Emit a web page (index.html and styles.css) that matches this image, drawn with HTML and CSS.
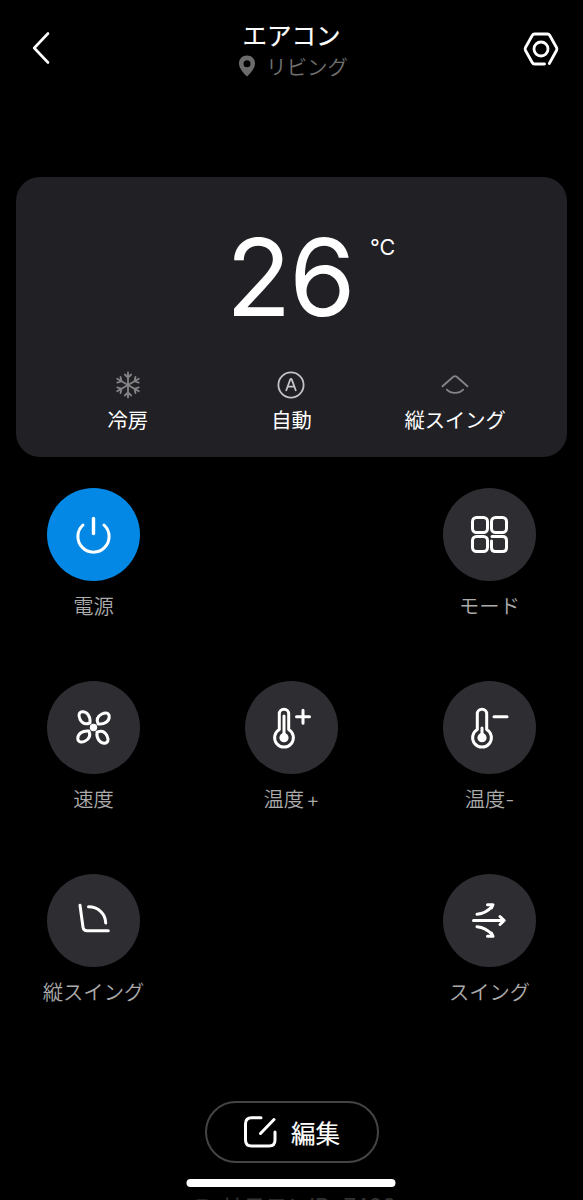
FILE: index.html
```
<!DOCTYPE html>
<html lang="ja">
<head>
    <meta charset="UTF-8">
    <meta name="viewport" content="width=device-width, initial-scale=1.0">
    <title>エアコン</title>
    <link rel="stylesheet" href="styles.css">
</head>
<body>

    <header class="header">
        <svg class="icon" width="36" height="36" viewBox="0 0 36 36">
            <path d="M24 3.5 L10.2 18 L24 32.5" stroke-width="2.6"/>
        </svg>
        <div class="heading">
            <h1>エアコン</h1>
            <div class="room">
                <svg width="18" height="22" viewBox="0 0 18 22">
                    <path fill="#6c6c6c" fill-rule="evenodd" d="M9 .5 C4.2 .5 1 4 1 8.4 C1 13.4 5.5 17.8 9 21.5 C12.5 17.8 17 13.4 17 8.4 C17 4 13.8 .5 9 .5 Z M9 5.3 a3.5 3.5 0 1 1 0 7 a3.5 3.5 0 1 1 0 -7 Z"/>
                </svg>
                <span>リビング</span>
            </div>
        </div>
        <svg class="icon" width="36" height="36" viewBox="0 0 36 36">
            <path d="M21.5 33 H11.5 Q10 33 9.2 31.5 L2.5 19.5 Q1.7 18 2.5 16.5 L9.2 4.5 Q10 3 11.5 3 H24.5 Q26 3 26.8 4.5 L33.5 16.5 Q34.3 18 33.5 19.5 L26.3 32.5" stroke-width="2.8"/>
            <circle cx="18" cy="18" r="7" stroke-width="2.8"/>
        </svg>
    </header>

    <section class="card">
        <div class="temp">26<span class="unit">°C</span></div>
        <div class="status">
            <div class="status-item">
                <svg class="icon snow" width="28" height="28" viewBox="0 0 28 28">
                    <g id="arm"><path d="M14 14 V1.5 M10.8 3.5 L14 6.5 L17.2 3.5"/></g>
                    <use href="#arm" transform="rotate(60 14 14)"/>
                    <use href="#arm" transform="rotate(120 14 14)"/>
                    <use href="#arm" transform="rotate(180 14 14)"/>
                    <use href="#arm" transform="rotate(240 14 14)"/>
                    <use href="#arm" transform="rotate(300 14 14)"/>
                </svg>
                <span>冷房</span>
            </div>
            <div class="status-item">
                <svg class="icon auto" width="28" height="28" viewBox="0 0 28 28">
                    <circle cx="14" cy="14" r="12.6"/>
                    <path d="M9.3 19.3 L13.2 8.6 Q14 7.4 14.8 8.6 L18.7 19.3 M11 15.6 H17"/>
                </svg>
                <span>自動</span>
            </div>
            <div class="status-item">
                <svg class="icon swing" width="28" height="28" viewBox="0 0 28 28">
                    <path d="M1.5 15.3 L12.3 5.8 Q14 4.4 15.7 5.8 L26.5 15.3 M5.8 18.6 C10 23 18 23 22.2 18.6"/>
                </svg>
                <span>縦スイング</span>
            </div>
        </div>
    </section>

    <main class="controls">
        <div class="control">
            <button class="round blue">
                <svg class="icon" width="44" height="44" viewBox="0 0 44 44">
                    <path d="M21.5 5.5 V20.5" stroke-width="3.4"/>
                    <path d="M11 12 A15.6 15.6 0 1 0 32 12"/>
                </svg>
            </button>
            <span>電源</span>
        </div>
        <div class="control right">
            <button class="round">
                <svg class="icon" width="44" height="44" viewBox="0 0 44 44">
                    <rect x="4.5" y="4.5" width="15" height="15" rx="4"/>
                    <rect x="23.5" y="4.5" width="15" height="15" rx="4"/>
                    <rect x="4.5" y="23.5" width="15" height="15" rx="4"/>
                    <path d="M23.5 28 V34.5 Q23.5 38.5 27.5 38.5 H34.5 Q38.5 38.5 38.5 34.5 V27.5 Q38.5 23.5 34.5 23.5 H24"/>
                </svg>
            </button>
            <span>モード</span>
        </div>

        <div class="control">
            <button class="round">
                <svg class="icon" width="44" height="44" viewBox="0 0 44 44">
                    <circle cx="21.5" cy="21.5" r="3.7" class="solid"/>
                    <path d="M18 16.8 C13.5 19 10 17 8 13.2 C6 9 7 6 10.5 5.8 C15 5.6 18.8 10.5 18 16.8 Z"/>
                    <path d="M26.2 18 C24 13.5 26 10 29.8 8 C34 6 37 7 37.2 10.5 C37.4 15 32.5 18.8 26.2 18 Z"/>
                    <path d="M25 26.2 C29.5 24 33 26 35 29.8 C37 34 36 37 32.5 37.2 C28 37.4 24.2 32.5 25 26.2 Z"/>
                    <path d="M16.8 25 C19 29.5 17 33 13.2 35 C9 37 6 36 5.800 32.5 C5.6 28 10.5 24.2 16.8 25 Z"/>
                </svg>
            </button>
            <span>速度</span>
        </div>
        <div class="control">
            <button class="round">
                <svg class="icon" width="44" height="44" viewBox="0 0 44 44">
                    <path d="M9.3 23.5 V8 A4.7 4.7 0 0 1 18.7 8 V23.5 A9.4 9.4 0 1 1 9.3 23.5 Z"/>
                    <path d="M14 31.5 V10"/>
                    <circle cx="14" cy="31.7" r="4.6" class="solid"/>
                    <path d="M33 4.2 V17.3 M26.5 10.8 H39.5"/>
                </svg>
            </button>
            <span>温度<span class="sign">+</span></span>
        </div>
        <div class="control">
            <button class="round">
                <svg class="icon" width="44" height="44" viewBox="0 0 44 44">
                    <path d="M9.3 23.5 V8 A4.7 4.7 0 0 1 18.7 8 V23.5 A9.4 9.4 0 1 1 9.3 23.5 Z"/>
                    <path d="M14 31.5 V22"/>
                    <circle cx="14" cy="31.7" r="4.6" class="solid"/>
                    <path d="M26 10.8 H39"/>
                </svg>
            </button>
            <span>温度-</span>
        </div>

        <div class="control">
            <button class="round">
                <svg class="icon" width="44" height="44" viewBox="0 0 44 44">
                    <path d="M8 6.300 L11 28.3 Q11.6 31.800 15 31.8 H36.3"/>
                    <path d="M16.5 7.8 C26 7.8 33.5 14.5 33.7 24"/>
                </svg>
            </button>
            <span>縦スイング</span>
        </div>
        <div class="control right">
            <button class="round">
                <svg class="icon" width="44" height="44" viewBox="0 0 44 44">
                    <path d="M5.5 21.5 H36 M32 17.5 L36.2 21.5 L32 25.5"/>
                    <path d="M9 15.3 C15 14.8 20.5 11.5 24 7.5 M19.5 5.7 H25 L23.5 9"/>
                    <path d="M9 27.7 C15 28.2 20.5 31.5 24 35.5 M19.5 37.3 H25 L23.5 34"/>
                </svg>
            </button>
            <span>スイング</span>
        </div>
    </main>

    <button class="edit">
        <svg class="icon" width="34" height="34" viewBox="0 0 34 34">
            <path d="M18 2.7 H8.5 Q2.5 2.7 2.5 8.7 V25 Q2.5 31 8.5 31 H26 Q32 31 32 25 V17 M17.5 18.5 L31 4.5"/>
        </svg>
        <span>編集</span>
    </button>

    <footer class="footer">
        <span class="copy-box"></span>
        <span>リモコンID: 7428</span>
        <div class="home-bar"></div>
    </footer>

</body>
</html>
```
FILE: styles.css
```
* {
    box-sizing: border-box;
}
body {
    margin: 0;
    height: 1200px;
    overflow: hidden;
    display: flex;
    flex-direction: column;
    align-items: center;
    background-color: #000;
    color: #fff;
    font-family: Inter, "Noto Sans CJK JP", sans-serif;
}
button {
    padding: 0;
    border: none;
    font-family: inherit;
    color: inherit;
    cursor: pointer;
}
svg {
    display: block;
    flex: none;
}
.icon {
    fill: none;
    stroke: #fff;
    stroke-width: 3;
    stroke-linecap: round;
    stroke-linejoin: round;
}
.icon .solid {
    fill: #fff;
    stroke: none;
}
.header {
    width: 100%;
    height: 177px;
    flex: none;
    padding: 20px 24px 0 24px;
    display: flex;
    justify-content: space-between;
}
.header > .icon {
    margin-top: 10px;
}
.header > .icon:last-child {
    margin-top: 11px;
}
.heading {
    display: flex;
    flex-direction: column;
    align-items: center;
}
h1 {
    margin: 0;
    font-size: 24.5px;
    line-height: 32px;
    font-weight: 400;
    -webkit-text-stroke: 0.2px #fff;
}
.room {
    display: flex;
    align-items: center;
    gap: 10px;
    height: 28px;
    margin-left: 3px;
    font-size: 20.5px;
    font-weight: 350;
    color: #707070;
}
.card {
    width: 551px;
    height: 280px;
    flex: none;
    padding: 0 30px;
    border-radius: 24px;
    background-color: #212025;
}
.temp {
    position: relative;
    width: 131px;
    margin: 36px auto 0;
    font-size: 107px;
    line-height: 128px;
    letter-spacing: -2px;
}
.unit {
    position: absolute;
    left: 144px;
    top: 21px;
    font-size: 21.5px;
    line-height: 26px;
    letter-spacing: 0;
}
.status {
    display: grid;
    grid-template-columns: repeat(3, 1fr);
    margin-top: 30px;
}
.status-item {
    display: flex;
    flex-direction: column;
    align-items: center;
    gap: 7px;
    font-size: 20.3px;
    line-height: 30px;
}
.status-item .icon {
    stroke-width: 1.8;
}
.icon.snow,
.icon.swing {
    stroke: #858587;
}
.icon.auto {
    stroke: #c4c4c6;
}
.controls {
    display: grid;
    grid-template-columns: repeat(3, 104px);
    grid-auto-rows: 193px;
    column-gap: 94px;
    margin-top: 31px;
}
.control {
    display: flex;
    flex-direction: column;
    align-items: center;
    gap: 11px;
    font-size: 20.3px;
    font-weight: 350;
    line-height: 30px;
    white-space: nowrap;
    color: #ababab;
}
.control.right {
    grid-column: 3;
}
.sign {
    margin-left: 2px;
}
.round {
    width: 93px;
    height: 93px;
    display: flex;
    align-items: center;
    justify-content: center;
    border-radius: 50%;
    background-color: #2e2d32;
}
.round.blue {
    background-color: #0388e5;
}
.edit {
    width: 174px;
    height: 62px;
    flex: none;
    display: flex;
    align-items: center;
    justify-content: center;
    gap: 14px;
    margin-top: 34px;
    border: 2px solid #444;
    border-radius: 31px;
    background-color: #000;
    font-size: 24.5px;
    -webkit-text-stroke: 0.2px #fff;
}
.footer {
    position: relative;
    display: flex;
    align-items: center;
    gap: 12px;
    margin-top: 28px;
    font-size: 22px;
    line-height: 30px;
    white-space: nowrap;
    padding-left: 8px;
    color: #333;
}
.copy-box {
    width: 14px;
    height: 14px;
    border: 1px solid #222;
    border-radius: 3px;
}
/* lies over the last line of the page */
.home-bar {
    position: absolute;
    left: 50%;
    top: -12px;
    width: 209px;
    height: 8px;
    transform: translateX(-50%);
    border-radius: 4px;
    background-color: #fff;
}
```
